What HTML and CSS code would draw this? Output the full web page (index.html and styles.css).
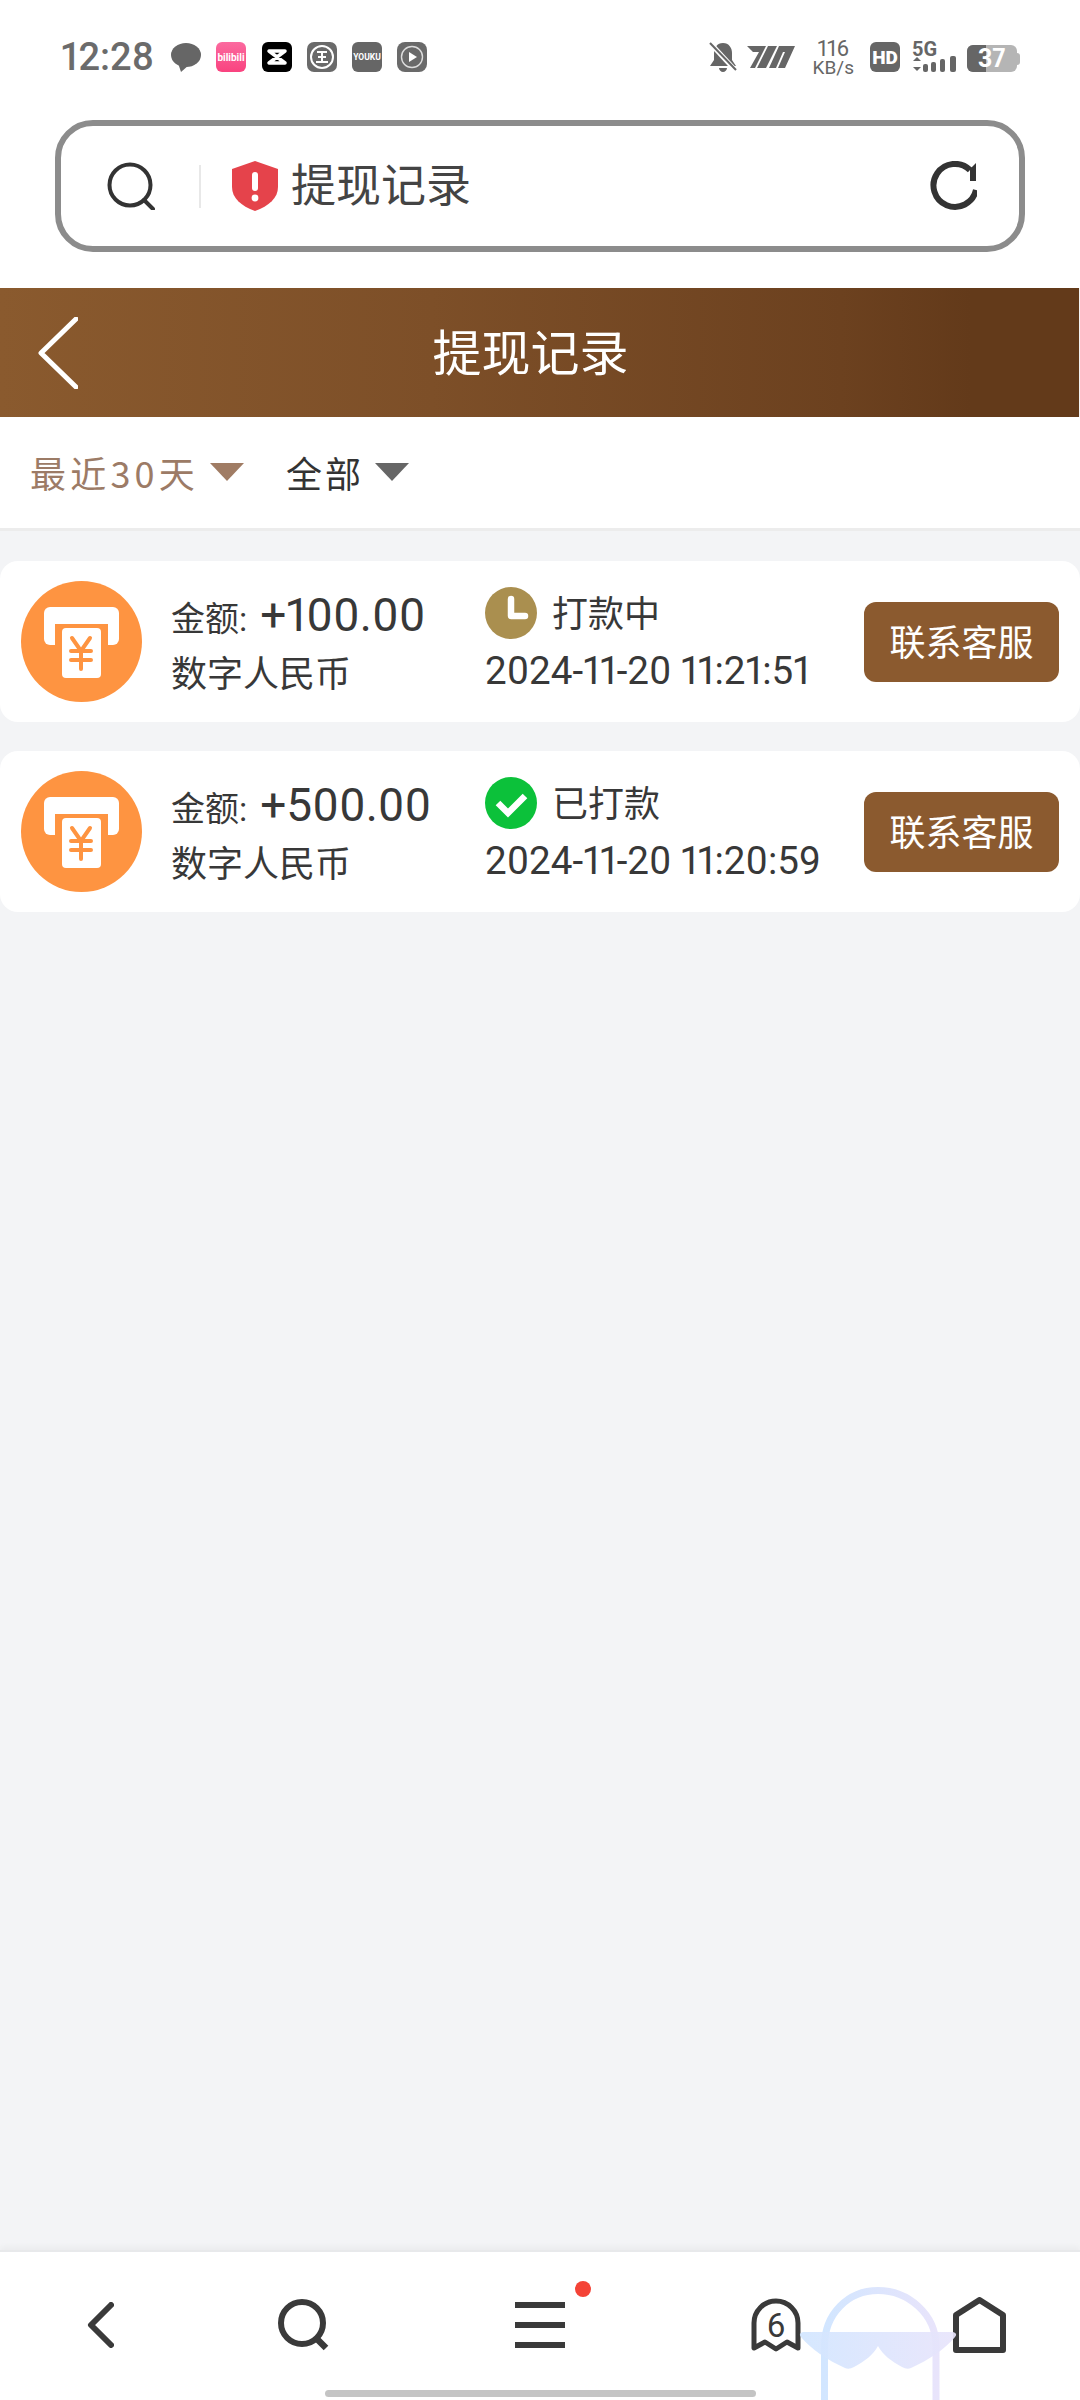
FILE: index.html
```html
<!DOCTYPE html>
<html lang="zh-CN">
<head>
  <meta charset="UTF-8">
  <meta name="viewport" content="width=device-width, initial-scale=1">
  <title>提现记录</title>
  <link rel="stylesheet" href="styles.css">
</head>
<body>

  <svg class="defs" width="0" height="0">
    <defs>
      <symbol id="receipt" viewBox="0 0 121 121">
        <circle cx="60.5" cy="60.5" r="60.5" fill="#fe9441"/>
        <rect x="23" y="26" width="75" height="38" rx="6" fill="#fff"/>
        <rect x="34" y="43" width="53" height="22" fill="#fe9441"/>
        <rect x="41" y="47" width="39" height="50" rx="4" fill="#fff"/>
        <g stroke="#fe9441" stroke-width="4" fill="none" stroke-linecap="round">
          <path d="M51 57l9 13 9-13M60 70v18M50 70h20M50 79h20"/>
        </g>
      </symbol>
    </defs>
  </svg>

  <div class="top">
    <!-- Status bar -->
    <div class="status-bar">
      <div class="status-left">
        <span class="time">12:28</span>
        <svg class="st-icon" viewBox="0 0 30 30"><ellipse cx="15" cy="13" rx="15" ry="12" fill="#666"/><path d="M7 21l3 9 8-7z" fill="#666"/></svg>
        <span class="app bili"><span class="bili-text">bilibili</span></span>
        <svg class="st-icon" viewBox="0 0 30 30"><rect width="30" height="30" rx="6" fill="#000"/><path d="M7 9h16L7 21h16z" fill="none" stroke="#fff" stroke-width="3.500" stroke-linejoin="round"/></svg>
        <svg class="st-icon" viewBox="0 0 30 30"><rect width="30" height="30" rx="7" fill="#6a6a6a"/><circle cx="15" cy="15" r="11" fill="none" stroke="#fff" stroke-width="2"/><path d="M10 10h10M15 10v10M11 15h8M9 20h12" stroke="#fff" stroke-width="2" fill="none"/></svg>
        <span class="app youku">YOUKU</span>
        <svg class="st-icon" viewBox="0 0 30 30"><rect width="30" height="30" rx="8" fill="#6a6a6a"/><circle cx="15" cy="15" r="10.5" fill="none" stroke="#ddd" stroke-width="1.4"/><path d="M12 10l8 5-8 5z" fill="#fff"/></svg>
      </div>
      <div class="status-right">
        <svg class="bell" viewBox="0 0 28 30"><path d="M14 1c6 0 9 5 9 10v7l4 6H1l4-6v-7c0-5 3-10 9-10zM10 26h8c0 2-2 4-4 4s-4-2-4-4z" fill="#666"/><path d="M1 1l26 28" stroke="#fff" stroke-width="5"/><path d="M1 1l26 27" stroke="#666" stroke-width="2"/></svg>
        <svg class="speed-logo" viewBox="0 0 48 22"><path d="M0 0H19L8 22H3L12 6H6zM21 0H30L19 22H10zM32 0H48L38 22H31L38 6H36L29 22H22z" fill="#666"/></svg>
        <div class="speed"><span class="speed-num">116</span><span class="unit">KB/s</span></div>
        <span class="app hd">HD</span>
        <div class="net">
          <span class="net-label">5G</span>
          <svg class="net-bars" viewBox="0 0 45 16"><path d="M5 1l4 4H1zM5 15l4-4H1z" fill="#666"/><rect x="11" y="8" width="5" height="8" rx="2" fill="#666"/><rect x="19" y="6" width="5" height="10" rx="2" fill="#666"/><rect x="28" y="3" width="5" height="13" rx="2" fill="#666"/><rect x="38" y="0" width="6" height="16" rx="2" fill="#666"/></svg>
        </div>
        <div class="battery">
          <div class="battery-body"><span class="battery-fill"></span><span class="battery-num">37</span></div>
          <span class="battery-tip"></span>
        </div>
      </div>
    </div>

    <!-- Address bar -->
    <div class="address-bar">
      <svg class="addr-search" viewBox="0 0 48 48"><circle cx="23" cy="23" r="20.5" fill="none" stroke="#333" stroke-width="4"/><path d="M37 38l9 9" stroke="#333" stroke-width="4" stroke-linecap="round"/></svg>
      <span class="addr-divider"></span>
      <svg class="shield" viewBox="0 0 46 50"><path d="M23 0l23 8v18c0 11-9 19-23 24C9 45 0 37 0 26V8z" fill="#e5434b"/><rect x="20" y="11" width="6" height="19" rx="3" fill="#fff"/><circle cx="23" cy="37" r="3.4" fill="#fff"/></svg>
      <span class="addr-text">提现记录</span>
      <svg class="refresh" viewBox="0 0 50 50"><path d="M49 29A21.500 21.500 0 1 1 43 9" fill="none" stroke="#333" stroke-width="6"/><path d="M49 2V20H43V8z" fill="#333"/></svg>
    </div>
  </div>

  <header class="page-head">
    <svg class="back" viewBox="0 0 40 72"><path d="M38 2L3 36l35 34" fill="none" stroke="#fff" stroke-width="5" stroke-linecap="round" stroke-linejoin="round"/></svg>
    <h1>提现记录</h1>
  </header>

  <div class="filters">
    <span class="filter active">最近30天</span><i class="caret active"></i>
    <span class="filter">全部</span><i class="caret"></i>
  </div>

  <main>
    <div class="card">
      <svg class="card-icon"><use href="#receipt"/></svg>
      <div class="info">
        <div class="amount"><span class="amount-label">金额:</span><span class="amount-num">+100.00</span></div>
        <div class="method">数字人民币</div>
      </div>
      <div class="state">
        <div class="state-row">
          <svg class="state-icon" viewBox="0 0 52 52"><circle cx="26" cy="26" r="26" fill="#aa8f4f"/><path d="M26 12v17h14" fill="none" stroke="#fff" stroke-width="6.500" stroke-linecap="round" stroke-linejoin="round"/></svg>
          <span class="state-text">打款中</span>
        </div>
        <div class="date">2024-11-20 11:21:51</div>
      </div>
      <button class="contact">联系客服</button>
    </div>

    <div class="card">
      <svg class="card-icon"><use href="#receipt"/></svg>
      <div class="info">
        <div class="amount"><span class="amount-label">金额:</span><span class="amount-num">+500.00</span></div>
        <div class="method">数字人民币</div>
      </div>
      <div class="state">
        <div class="state-row">
          <svg class="state-icon" viewBox="0 0 52 52"><circle cx="26" cy="26" r="26" fill="#0cc13a"/><path d="M13 26l10 10 17-17" fill="none" stroke="#fff" stroke-width="6.500"/></svg>
          <span class="state-text">已打款</span>
        </div>
        <div class="date">2024-11-20 11:20:59</div>
      </div>
      <button class="contact">联系客服</button>
    </div>
  </main>

  <!-- Bottom nav -->
  <footer class="bottom-nav">
    <div class="nav-row">
      <svg class="nav-back" viewBox="0 0 27 46"><path d="M24 3L4 23l20 20" fill="none" stroke="#3a3a3a" stroke-width="6" stroke-linecap="round" stroke-linejoin="round"/></svg>
      <svg class="nav-search" viewBox="0 0 51 52"><circle cx="24" cy="24" r="21" fill="none" stroke="#3a3a3a" stroke-width="6"/><path d="M38 39l10 10" stroke="#3a3a3a" stroke-width="6.500"/></svg>
      <div class="nav-menu"><span></span><span></span><span></span><i class="red-dot"></i></div>
      <div class="nav-tabs">
        <svg viewBox="0 0 50 54"><path d="M3 50V25a22 22 0 0 1 44 0v25l-11-6-11 7-11-7z" fill="none" stroke="#3a3a3a" stroke-width="5" stroke-linejoin="round"/><text x="25" y="39" text-anchor="middle" class="tabs-num">6</text></svg>
      </div>
      <svg class="nav-home" viewBox="0 0 53 56"><path d="M26.500 3L50 18v35H3V18z" fill="none" stroke="#3a3a3a" stroke-width="6" stroke-linejoin="round"/></svg>
    </div>
    <div class="home-bar"></div>
    <svg class="mascot" viewBox="0 0 158 113">
      <defs>
        <linearGradient id="blue" x1="0" x2="1" y1="0" y2="0">
          <stop offset="0" stop-color="#d2e6ff"/>
          <stop offset="1" stop-color="#e8e4fb"/>
        </linearGradient>
      </defs>
      <path d="M25.500 113V59C25.500 27 49 3.500 79 3.500S137 27 137 59V113" fill="none" stroke="url(#blue)" stroke-width="7"/>
      <path d="M4 45H154Q159 46 156 50C146 62 130 73 112 81Q108 83 103 80C92 74 84 68 79 59C74 68 66 74 55 80Q50 83 46 81C28 73 12 62 2 50Q-1 46 4 45Z" fill="url(#blue)" fill-opacity=".92"/>
    </svg>
  </footer>

</body>
</html>
```

FILE: styles.css
```css
/* Reset */
* { margin: 0; padding: 0; box-sizing: border-box; }
body {
  width: 1080px;
  height: 2400px;
  overflow: hidden;
  display: flex;
  flex-direction: column;
  background-color: #f3f4f6;
  color: #383838;
  font-family: Roboto, "Noto Sans CJK SC", sans-serif;
  font-variant-numeric: proportional-nums;
}
.defs { position: absolute; }
.top { background-color: #fff; padding-bottom: 36px; }

/* Status bar */
.status-bar {
  height: 120px;
  padding: 41px 60px 0 61px;
  display: flex;
  justify-content: space-between;
  align-items: flex-start;
}
.status-left { display: flex; align-items: center; height: 32px; }
.time {
  width: 110px;
  font-size: 38px;
  font-weight: 500;
  color: #6b6b6b;
  line-height: 32px;
}
.st-icon { width: 30px; height: 30px; margin-right: 15px; flex: none; }
.app {
  width: 30px;
  height: 30px;
  border-radius: 6px;
  display: flex;
  align-items: center;
  justify-content: center;
  color: #fff;
  flex: none;
}
.bili { background: linear-gradient(#fb6a9f, #f9437f); margin-right: 16px; }
.bili-text { font-size: 10px; font-weight: 700; }
.youku {
  background-color: #666;
  margin-right: 15px;
  font-size: 8.500px;
  font-weight: 700;
}
.status-right { display: flex; align-items: flex-start; }
.bell { width: 28px; height: 30px; margin-top: 1px; }
.speed-logo { width: 48px; height: 22px; margin: 5px 0 0 10px; }
.speed {
  margin: -3px 0 0 18px;
  display: flex;
  flex-direction: column;
  align-items: center;
  color: #666;
}
.speed-num { font-size: 22px; line-height: 21px; }
.unit { font-size: 19px; line-height: 17px; }
.hd {
  margin: 1px 0 0 16px;
  background-color: #666;
  font-size: 19px;
  font-weight: 900;
}
.net { margin: 1px 0 0 12px; width: 45px; color: #666; }
.net-label { display: block; font-size: 20px; font-weight: 700; line-height: 14px; }
.net-bars { display: block; width: 45px; height: 16px; }
.battery { display: flex; align-items: center; margin: 4px 0 0 10px; }
.battery-body {
  position: relative;
  width: 50px;
  height: 27px;
  border-radius: 6px;
  background-color: #b5b5b5;
  overflow: hidden;
}
.battery-fill {
  position: absolute;
  left: 0;
  top: 0;
  width: 19px;
  height: 27px;
  background-color: #666;
}
.battery-num {
  position: absolute;
  left: 11px;
  top: 0;
  color: #fff;
  font-size: 25px;
  font-weight: 700;
  line-height: 27px;
}
.battery-tip {
  width: 3px;
  height: 12px;
  border-radius: 0 3px 3px 0;
  background-color: #b5b5b5;
}

/* Address bar */
.address-bar {
  height: 132px;
  margin: 0 55px;
  padding: 0 42px 0 46px;
  border: 6px solid #8c8c8c;
  border-radius: 38px;
  display: flex;
  align-items: center;
}
.addr-search { width: 48px; height: 48px; margin-right: 44px; flex: none; }
.addr-divider { width: 2px; height: 43px; background-color: #e8e8e8; margin-right: 31px; }
.shield { width: 46px; height: 50px; margin-right: 13px; }
.addr-text { font-size: 45px; color: #444; line-height: 50px; padding-top: 2px; }
.refresh { width: 50px; height: 50px; margin-left: auto; }

/* Page header */
.page-head {
  height: 129px;
  margin-right: 1px;
  padding: 0 56px 0 38px;
  display: grid;
  grid-template-columns: 1fr auto 1fr;
  align-items: center;
  background: linear-gradient(90deg, #8a5a2e 0%, #7d4f28 40%, #6c411f 78%, #633a1a 90%);
}
.back { width: 40px; height: 72px; }
.page-head h1 { font-size: 49px; font-weight: 400; color: #fff; padding-bottom: 6px; }

/* Filters */
.filters {
  height: 114px;
  padding: 0 0 2px 30px;
  display: flex;
  align-items: center;
  background-color: #fff;
  border-bottom: 3px solid #ececec;
}
.filter { font-size: 36px; letter-spacing: 3px; color: #333; font-family: "Noto Sans CJK SC", sans-serif; }
.filter.active { color: #9c7b66; letter-spacing: 4.200px; }
.caret {
  width: 0;
  height: 0;
  margin: 0 42px 0 11px;
  border-left: 17px solid transparent;
  border-right: 17px solid transparent;
  border-top: 18px solid #666;
}
.caret.active { border-top-color: #a07c64; }

/* Records */
main {
  flex: 1;
  padding-top: 30px;
  display: flex;
  flex-direction: column;
  gap: 29px;
}
.card {
  height: 161px;
  padding: 0 21px;
  border-radius: 18px;
  background-color: #fff;
  display: flex;
  align-items: center;
}
.card-icon { width: 121px; height: 121px; flex: none; }
.info { width: 314px; margin-left: 29px; padding-top: 7px; flex: none; }
.amount { height: 60px; line-height: 60px; white-space: nowrap; }
.amount-label { font-size: 34px; }
.amount-num { font-size: 46px; margin-left: 13px; }
.method { height: 60px; line-height: 60px; font-size: 36px; }
.state { padding-top: 2px; }
.state-row { display: flex; align-items: center; gap: 15px; height: 56px; font-size: 36px; }
.state-icon { width: 52px; height: 52px; }
.state-text { margin-top: -4px; }
.date { font-size: 38.600px; line-height: 60px; white-space: nowrap; }
.contact {
  width: 195px;
  height: 80px;
  margin-left: auto;
  padding-bottom: 4px;
  border: none;
  border-radius: 12px;
  background-color: #8b5a2f;
  color: #fff;
  font-family: inherit;
  font-size: 36px;
}

/* Bottom nav */
.bottom-nav {
  position: relative;
  height: 150px;
  padding-top: 8px;
  background-color: #fff;
  border-top: 2px solid #e8e9eb;
  box-shadow: 0 -3px 6px rgba(0,0,0,0.04);
}
.nav-row {
  height: 130px;
  display: grid;
  grid-template-columns: 200px 206px 268px 204px 202px;
  justify-items: center;
  align-items: center;
}
.nav-back { width: 27px; height: 46px; }
.nav-search { width: 51px; height: 52px; }
.nav-menu {
  position: relative;
  width: 50px;
  height: 46px;
  display: flex;
  flex-direction: column;
  justify-content: space-between;
}
.nav-menu span { height: 6px; background-color: #3a3a3a; }
.red-dot {
  position: absolute;
  left: 60px;
  top: -21px;
  width: 16px;
  height: 16px;
  border-radius: 50%;
  background-color: #f44336;
}
.nav-tabs svg { display: block; width: 50px; height: 54px; }
.tabs-num { font-size: 33px; fill: #3a3a3a; }
.nav-home { width: 53px; height: 56px; }
.home-bar {
  width: 431px;
  height: 7px;
  margin: 0 auto;
  border-radius: 4px;
  background-color: #c4c4c4;
}
.mascot {
  position: absolute;
  left: 799px;
  top: 35px;
  width: 158px;
  height: 113px;
}
```
